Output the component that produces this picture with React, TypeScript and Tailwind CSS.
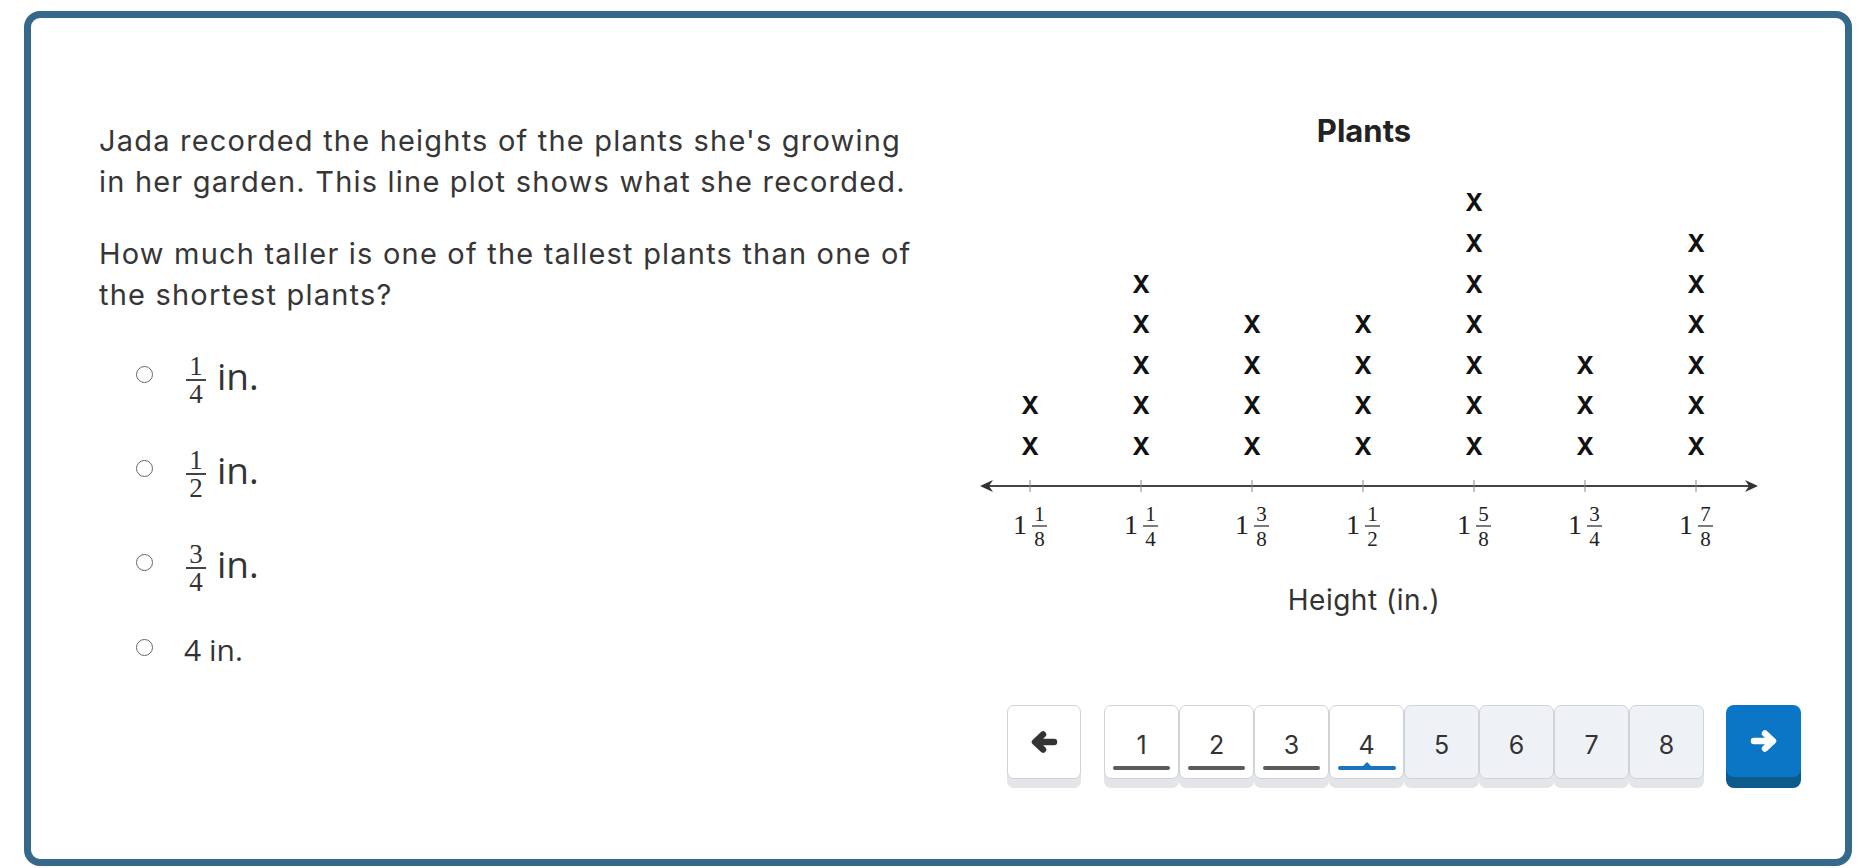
const columns = [
  { num: "1", den: "8", count: 2 },
  { num: "1", den: "4", count: 5 },
  { num: "3", den: "8", count: 4 },
  { num: "1", den: "2", count: 4 },
  { num: "5", den: "8", count: 7 },
  { num: "3", den: "4", count: 3 },
  { num: "7", den: "8", count: 6 },
];

const options = [
  { num: "1", den: "4" },
  { num: "1", den: "2" },
  { num: "3", den: "4" },
  { whole: "4" },
];

function Fraction({ num, den }: { num: string; den: string }) {
  return (
    <span className="mt-[12px] inline-flex w-[22px] flex-col items-center font-['Liberation_Serif',serif] text-[27px] leading-[24px] text-[#333]">
      <span>{num}</span>
      <span className="my-[1px] h-[2px] w-[20px] bg-[#444]" />
      <span>{den}</span>
    </span>
  );
}

function Arrow({ dir, color }: { dir: "left" | "right"; color: string }) {
  return (
    <svg width="28" height="24" viewBox="0 0 28 24" className={dir === "right" ? "rotate-180" : ""}>
      <path
        d="M24 12 H6 M13 4.5 L5 12 L13 19.5"
        fill="none"
        stroke={color}
        strokeWidth="6.5"
        strokeLinecap="round"
        strokeLinejoin="round"
      />
    </svg>
  );
}

function LinePlot() {
  const colX = (i: number) => 60 + i * 111;
  return (
    <svg width="800" height="530" viewBox="0 0 800 530" className="block">
      <text x="394" y="42" textAnchor="middle" fontFamily="Inter, sans-serif" fontWeight="700" fontSize="31" fill="#222">
        Plants
      </text>

      {columns.map((c, i) =>
        Array.from({ length: c.count }).map((_, k) => (
          <text
            key={`${i}-${k}`}
            x={colX(i)}
            y={346 - k * 40.6 + 9}
            textAnchor="middle"
            fontFamily="Inter, sans-serif"
            fontWeight="700"
            fontSize="24"
            fill="#111"
          >
            X
          </text>
        ))
      )}

      {/* axis */}
      <line x1="16" y1="386" x2="781" y2="386" stroke="#444" strokeWidth="2" />
      <polygon points="10,386 23,380 19,386 23,392" fill="#333" />
      <polygon points="788,386 775,380 779,386 775,392" fill="#333" />

      {columns.map((c, i) => {
        const x = colX(i);
        return (
          <g key={i}>
            <line x1={x} y1="380" x2={x} y2="392" stroke="#888" strokeWidth="1" />
            <text x={x - 10} y="434" textAnchor="middle" fontFamily="'Liberation Serif', serif" fontSize="28" fill="#222">
              1
            </text>
            <text x={x + 9.5} y="421" textAnchor="middle" fontFamily="'Liberation Serif', serif" fontSize="21" fill="#222">
              {c.num}
            </text>
            <line x1={x + 2} y1="426" x2={x + 17} y2="426" stroke="#333" strokeWidth="1.3" />
            <text x={x + 9.5} y="446" textAnchor="middle" fontFamily="'Liberation Serif', serif" fontSize="21" fill="#222">
              {c.den}
            </text>
          </g>
        );
      })}

      <text x="394" y="510" textAnchor="middle" fontFamily="Inter, sans-serif" fontSize="28" letterSpacing="0.5" fill="#333">
        Height (in.)
      </text>
    </svg>
  );
}

function Underline({ active, done }: { active: boolean; done: boolean }) {
  if (active) {
    return (
      <svg width="58" height="10" viewBox="0 0 58 10" className="block">
        <path d="M2 5 H25 L29 1 L33 5 H56 A2 2 0 0 1 56 9 H2 A2 2 0 0 1 2 5 Z" fill="#1a73c0" />
      </svg>
    );
  }
  return (
    <div className="h-[10px] pt-[5px]">
      {done && <div className="h-[4px] w-[57px] rounded-full bg-[#5b5b5b]" />}
    </div>
  );
}

export default function App() {
  const current = 4;
  return (
    <div className="h-[868px] w-[1863px] bg-white pl-[24px] pr-[11px] pt-[11px] font-['Inter',sans-serif]">
      <div className="flex h-[855px] rounded-[16px] border-[7px] border-[#35698c] bg-white">
        {/* Question */}
        <div className="w-[939px] shrink-0 pl-[68px] pt-[102px] text-[#363636]">
          <p className="text-[29px] leading-[41px] tracking-[1.2px]">
            Jada recorded the heights of the plants she's growing
            <br />
            in her garden. This line plot shows what she recorded.
          </p>
          <p className="mt-[31px] text-[29px] leading-[41px] tracking-[1.2px]">
            How much taller is one of the tallest plants than one of
            <br />
            the shortest plants?
          </p>

          <ul className="ml-[37px] mt-[12px] font-['Open_Sans',sans-serif]">
            {options.map((o, i) => (
              <li key={i} className={`flex items-center ${i < 3 ? "h-[94px]" : "h-[76px]"}`}>
                <span className="h-[17px] w-[17px] rounded-full border-[1.5px] border-[#666]" />
                {o.whole ? (
                  <span className="ml-[31px] mt-[4px] text-[30px] leading-[33px] text-[#333]">{o.whole} in.</span>
                ) : (
                  <>
                    <span className="ml-[32px]">
                      <Fraction num={o.num!} den={o.den!} />
                    </span>
                    <span className="ml-[10px] mt-[2px] text-[37px] leading-[37px] text-[#333]">in.</span>
                  </>
                )}
              </li>
            ))}
          </ul>
        </div>

        {/* Plot + navigation */}
        <div className="flex flex-col pt-[82px]">
          <LinePlot />

          <div className="ml-[37px] mt-[75px] flex items-start">
            <button className="flex h-[74px] w-[74px] items-center justify-center rounded-[7px] border border-[#cfd3d7] bg-white shadow-[0_9px_0_#e3e5e8]">
              <Arrow dir="left" color="#333" />
            </button>

            <div className="ml-[23px] flex">
              {[1, 2, 3, 4, 5, 6, 7, 8].map((n) => {
                const visited = n <= current;
                return (
                  <button
                    key={n}
                    className={`flex h-[74px] w-[75px] flex-col items-center rounded-[7px] border border-[#cfd3d7] pt-[23px] text-[25px] leading-[32px] text-[#333] shadow-[0_9px_0_#e3e5e8] ${
                      visited ? "bg-white" : "bg-[#eef1f5]"
                    }`}
                  >
                    <span>{n}</span>
                    <Underline active={n === current} done={n < current} />
                  </button>
                );
              })}
            </div>

            <button className="ml-[22px] flex h-[72px] w-[75px] items-center justify-center rounded-[8px] bg-[#0b76c5] shadow-[0_11px_0_#0d5a8c]">
              <Arrow dir="right" color="#ffffff" />
            </button>
          </div>
        </div>
      </div>
    </div>
  );
}
